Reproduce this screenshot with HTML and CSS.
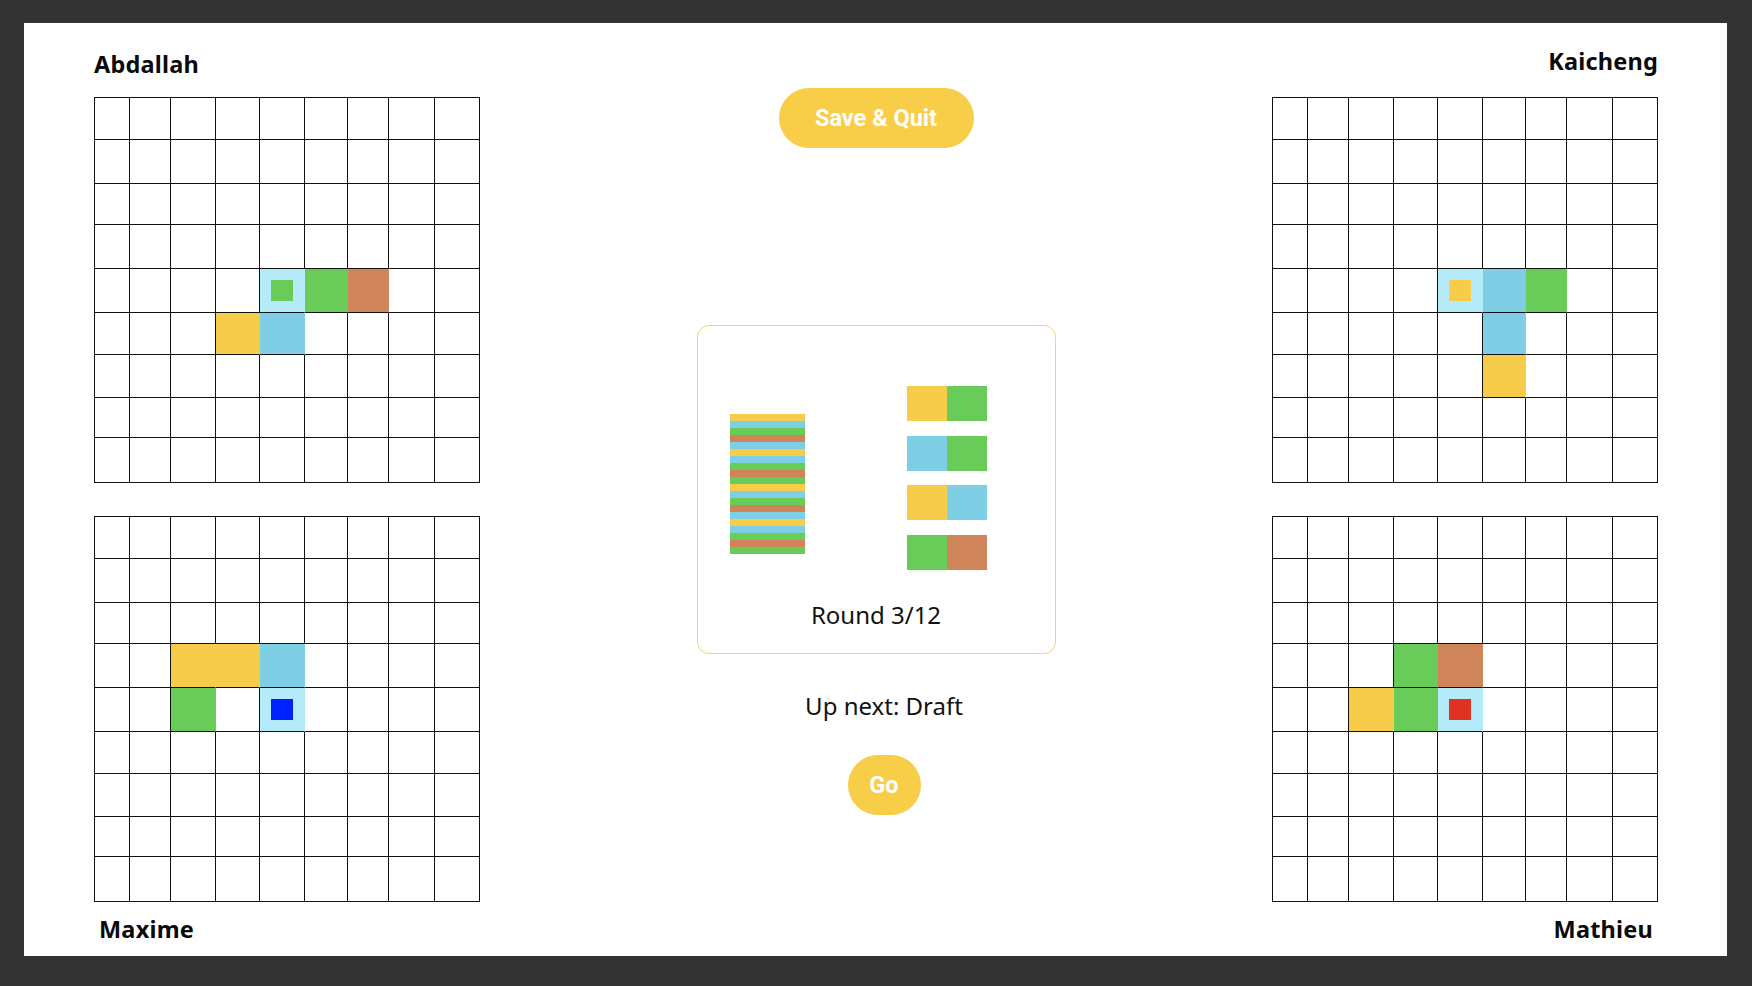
FILE: index.html
```html
<!DOCTYPE html>
<html lang="en">
<head>
<meta charset="utf-8">
<title>Game board</title>
<link rel="stylesheet" href="styles.css">
</head>
<body>
<main class="page">
  <section class="side side-left">
    <h2 class="name name-nw">Abdallah</h2>
    <div class="board">
      <span></span><span></span><span></span><span></span><span></span><span></span><span></span><span></span><span></span>
      <span></span><span></span><span></span><span></span><span></span><span></span><span></span><span></span><span></span>
      <span></span><span></span><span></span><span></span><span></span><span></span><span></span><span></span><span></span>
      <span></span><span></span><span></span><span></span><span></span><span></span><span></span><span></span><span></span>
      <span></span><span></span><span></span><span></span><span class="l"><b class="dot dg"></b></span><span class="g"></span><span class="o"></span><span></span><span></span>
      <span></span><span></span><span></span><span class="y"></span><span class="b"></span><span></span><span></span><span></span><span></span>
      <span></span><span></span><span></span><span></span><span></span><span></span><span></span><span></span><span></span>
      <span></span><span></span><span></span><span></span><span></span><span></span><span></span><span></span><span></span>
      <span></span><span></span><span></span><span></span><span></span><span></span><span></span><span></span><span></span>
    </div>
    <div class="board board-low">
      <span></span><span></span><span></span><span></span><span></span><span></span><span></span><span></span><span></span>
      <span></span><span></span><span></span><span></span><span></span><span></span><span></span><span></span><span></span>
      <span></span><span></span><span></span><span></span><span></span><span></span><span></span><span></span><span></span>
      <span></span><span></span><span class="y"></span><span class="y"></span><span class="b"></span><span></span><span></span><span></span><span></span>
      <span></span><span></span><span class="g"></span><span></span><span class="l"><b class="dot dn"></b></span><span></span><span></span><span></span><span></span>
      <span></span><span></span><span></span><span></span><span></span><span></span><span></span><span></span><span></span>
      <span></span><span></span><span></span><span></span><span></span><span></span><span></span><span></span><span></span>
      <span></span><span></span><span></span><span></span><span></span><span></span><span></span><span></span><span></span>
      <span></span><span></span><span></span><span></span><span></span><span></span><span></span><span></span><span></span>
    </div>
    <h2 class="name name-sw">Maxime</h2>
  </section>

  <section class="center">
    <button class="pill save">Save &amp; Quit</button>
    <div class="card">
      <div class="card-row">
        <div class="stack">
          <span class="y"></span><span class="b"></span><span class="g"></span><span class="o"></span><span class="b"></span>
          <span class="y"></span><span class="b"></span><span class="g"></span><span class="o"></span><span class="g"></span>
          <span class="y"></span><span class="b"></span><span class="g"></span><span class="o"></span><span class="b"></span>
          <span class="y"></span><span class="b"></span><span class="g"></span><span class="o"></span><span class="g"></span>
        </div>
        <div class="dominoes">
          <div class="domino"><span class="y"></span><span class="g"></span></div>
          <div class="domino"><span class="b"></span><span class="g"></span></div>
          <div class="domino"><span class="y"></span><span class="b"></span></div>
          <div class="domino"><span class="g"></span><span class="o"></span></div>
        </div>
      </div>
      <p class="round">Round 3/12</p>
    </div>
    <p class="next">Up next: Draft</p>
    <button class="pill go">Go</button>
  </section>

  <section class="side side-right">
    <h2 class="name name-ne">Kaicheng</h2>
    <div class="board">
      <span></span><span></span><span></span><span></span><span></span><span></span><span></span><span></span><span></span>
      <span></span><span></span><span></span><span></span><span></span><span></span><span></span><span></span><span></span>
      <span></span><span></span><span></span><span></span><span></span><span></span><span></span><span></span><span></span>
      <span></span><span></span><span></span><span></span><span></span><span></span><span></span><span></span><span></span>
      <span></span><span></span><span></span><span></span><span class="l"><b class="dot dy"></b></span><span class="b"></span><span class="g"></span><span></span><span></span>
      <span></span><span></span><span></span><span></span><span></span><span class="b"></span><span></span><span></span><span></span>
      <span></span><span></span><span></span><span></span><span></span><span class="y"></span><span></span><span></span><span></span>
      <span></span><span></span><span></span><span></span><span></span><span></span><span></span><span></span><span></span>
      <span></span><span></span><span></span><span></span><span></span><span></span><span></span><span></span><span></span>
    </div>
    <div class="board board-low">
      <span></span><span></span><span></span><span></span><span></span><span></span><span></span><span></span><span></span>
      <span></span><span></span><span></span><span></span><span></span><span></span><span></span><span></span><span></span>
      <span></span><span></span><span></span><span></span><span></span><span></span><span></span><span></span><span></span>
      <span></span><span></span><span></span><span class="g"></span><span class="o"></span><span></span><span></span><span></span><span></span>
      <span></span><span></span><span class="y"></span><span class="g"></span><span class="l"><b class="dot dr"></b></span><span></span><span></span><span></span><span></span>
      <span></span><span></span><span></span><span></span><span></span><span></span><span></span><span></span><span></span>
      <span></span><span></span><span></span><span></span><span></span><span></span><span></span><span></span><span></span>
      <span></span><span></span><span></span><span></span><span></span><span></span><span></span><span></span><span></span>
      <span></span><span></span><span></span><span></span><span></span><span></span><span></span><span></span><span></span>
    </div>
    <h2 class="name name-se">Mathieu</h2>
  </section>
</main>
</body>
</html>
```

FILE: styles.css
```css
html, body {
  margin: 0;
  padding: 0;
}

body {
  background: #333333;
  font-family: "Noto Sans", "Open Sans", sans-serif;
  color: #111;
}

.page {
  margin: 23px 0 0 24px;
  width: 1703px;
  height: 933px;
  background: #ffffff;
  box-sizing: border-box;
  padding: 0 69px 0 70px;
  display: grid;
  grid-template-columns: 386px 1fr 386px;
}

/* ---------- side columns ---------- */
.side {
  display: flex;
  flex-direction: column;
}

.name {
  margin: 0;
  font-size: 23.5px;
  letter-spacing: 0.2px;
  font-weight: 700;
  line-height: 30px;
  color: #0a0a0a;
}

.name-nw {
  margin-top: 26px;
  margin-bottom: 18px;
}

.name-sw {
  margin-top: 12px;
  padding-left: 5px;
}

.name-ne {
  margin-top: 23px;
  margin-bottom: 21px;
  text-align: right;
}

.name-se {
  margin-top: 12px;
  padding-right: 5px;
  text-align: right;
}

.board {
  width: 386px;
  box-sizing: border-box;
  display: grid;
  grid-template-columns: 35px 41px 45px 44px 45px 43px 41px 46px 45px;
  grid-template-rows: 42px 44px 41px 44px 44px 42px 43px 40px 45px;
  border-left: 1px solid #111;
  border-top: 1px solid #111;
}

.board-low {
  margin-top: 33px;
}

.board > span {
  border-right: 1px solid #111;
  border-bottom: 1px solid #111;
  display: flex;
  align-items: center;
  justify-content: center;
}

/* tile colours */
.y { background: #f7cc4a; }
.g { background: #6acc58; }
.o { background: #d0845a; }
.b { background: #7ecfe6; }
.l { background: #b5eaf8; }

.board > .y { border-right-color: #f7cc4a; }
.board > .g { border-right-color: #6acc58; }
.board > .o { border-right-color: #d0845a; }
.board > .b { border-right-color: #7ecfe6; }
.board > .l { border-right-color: #b5eaf8; }

.dot {
  display: block;
  width: 22px;
  height: 21px;
}

.dg { background: #6acc58; }
.dy { background: #f7cc4a; }
.dn { background: #0022ff; }
.dr { background: #e03222; }

/* ---------- center column ---------- */
.center {
  display: flex;
  flex-direction: column;
  align-items: center;
}

.pill {
  border: none;
  padding: 0;
  background: #f8cd48;
  color: #ffffff;
  font-family: Roboto, "Liberation Sans", sans-serif;
  font-weight: 700;
  font-size: 23.5px;
  height: 60px;
  border-radius: 30px;
  cursor: pointer;
}

.save {
  margin-top: 65px;
  width: 195px;
}

.card {
  margin-top: 177px;
  width: 359px;
  height: 329px;
  box-sizing: border-box;
  border: 1px solid #f6d36e;
  border-radius: 12px;
  padding-top: 60px;
  display: flex;
  flex-direction: column;
}

.card-row {
  display: flex;
  align-items: flex-start;
  padding-left: 32px;
}

.stack {
  width: 75px;
  margin-top: 28px;
  display: flex;
  flex-direction: column;
}

.stack > span {
  display: block;
  height: 7px;
}

.dominoes {
  margin-left: 102px;
  display: flex;
  flex-direction: column;
  gap: 14.6px;
}

.domino {
  display: flex;
}

.domino > span {
  width: 40px;
  height: 35px;
}

.round {
  margin: 29px 0 0;
  text-align: center;
  font-size: 24px;
  line-height: 32px;
  color: #111;
}

.next {
  margin: 36px 0 0 16px;
  font-size: 24px;
  line-height: 32px;
  color: #111;
}

.go {
  margin-top: 33px;
  margin-left: 16px;
  width: 73px;
}
```
